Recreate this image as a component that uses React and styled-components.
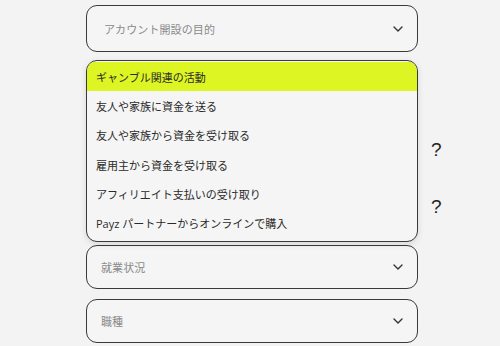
import React from "react";
import styled, { createGlobalStyle } from "styled-components";

const Global = createGlobalStyle`
  html, body { margin: 0; padding: 0; background: #f3f3f3; }
  body { font-family: "Open Sans", "Noto Sans CJK JP", sans-serif; }
  * { box-sizing: border-box; }
`;

const Page = styled.div`
  width: 500px;
  height: 346px;
  overflow: hidden;
  padding: 5px 0 0 86px;
`;

const Form = styled.div`
  position: relative;
  width: 332px;
  display: flex;
  flex-direction: column;
`;

const Field = styled.div`
  height: ${(p) => p.$h || 45}px;
  border: 1px solid #3a3a3a;
  border-radius: 11px;
  background: #f5f5f5;
  display: flex;
  align-items: center;
  justify-content: space-between;
  padding: 0 14px 0 ${(p) => p.$pl || 16}px;
  margin-top: ${(p) => p.$mt || 0}px;
  flex-shrink: 0;
`;

const Placeholder = styled.span`
  font-size: 11px;
  color: #8a8a8a;
  letter-spacing: 0.1px;
`;

const Hidden = styled.div`
  height: 193px;
  padding-top: 75px;
  display: flex;
  flex-direction: column;
  gap: 12px;
`;

const HelpRow = styled.div`
  position: relative;
  height: 45px;
  display: flex;
  align-items: center;
`;

const Help = styled.span`
  position: absolute;
  left: 345px;
  top: 50%;
  transform: translateY(-50%);
  font-family: "Liberation Sans", sans-serif;
  font-size: 19px;
  color: #222;
`;

const Menu = styled.ul`
  position: absolute;
  top: 55px;
  left: 0;
  width: 332px;
  height: 182px;
  margin: 0;
  padding: 1px 0 0;
  list-style: none;
  background: #f5f5f5;
  border: 1px solid #3a3a3a;
  border-radius: 11px;
  overflow: hidden;
  box-shadow: 0 2px 6px rgba(0, 0, 0, 0.12);
  z-index: 2;
`;

const Item = styled.li`
  height: 29.3px;
  display: flex;
  align-items: center;
  padding-left: 9px;
  font-size: 11px;
  color: #2a2a2a;
  background: ${(p) => (p.$active ? "#dcf523" : "transparent")};
`;

const Chevron = () => (
  <svg width="10" height="6" viewBox="0 0 10 6" fill="none">
    <polyline points="1,1 5,5 9,1" stroke="#333" strokeWidth="1.4" strokeLinecap="round" strokeLinejoin="round" />
  </svg>
);

const options = [
  "ギャンブル関連の活動",
  "友人や家族に資金を送る",
  "友人や家族から資金を受け取る",
  "雇用主から資金を受け取る",
  "アフィリエイト支払いの受け取り",
  "Payz パートナーからオンラインで購入",
];

export default function App() {
  return (
    <Page>
      <Global />
      <Form>
        <Field $h={47} $pl={17}>
          <Placeholder>アカウント開設の目的</Placeholder>
          <Chevron />
        </Field>
        <Hidden>
          <HelpRow><Help>?</Help></HelpRow>
          <HelpRow><Help>?</Help></HelpRow>
        </Hidden>
        <Field $h={44} $pl={14}>
          <Placeholder>就業状況</Placeholder>
          <Chevron />
        </Field>
        <Field $h={44} $mt={10} $pl={14}>
          <Placeholder>職種</Placeholder>
          <Chevron />
        </Field>
        <Menu>
          {options.map((o, i) => (
            <Item key={o} $active={i === 0}>{o}</Item>
          ))}
        </Menu>
      </Form>
    </Page>
  );
}
